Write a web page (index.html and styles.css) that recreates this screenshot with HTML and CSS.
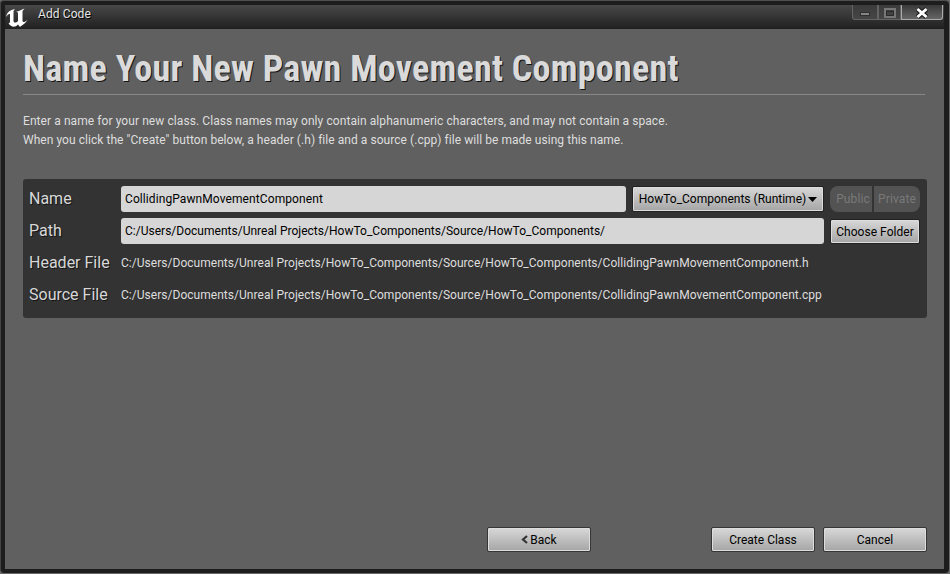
FILE: index.html
```
<!DOCTYPE html>
<html lang="en">
<head>
<meta charset="utf-8">
<title>Add Code</title>
<link rel="stylesheet" href="styles.css">
</head>
<body>
<div class="window">
  <header class="titlebar">
    <svg class="logo" viewBox="0 0 24 22" width="24" height="22"><path d="M1 11C2 6 5 4 10 3C8.500 4.500 8.500 5 8.500 7V15C9 17 11 17 13 15V7C13 6 12 6 11 6C14 5 16 4 19.500 2.500L17.500 5V15C18 17 20 16 22.500 14C20 18 17 19 15 21L13 18.500C10 22 6 21 3.500 17.500C5 17 5 16 5 15V8C4 7.500 2.500 8.500 1 11Z" fill="#fff"/></svg>
    <span class="caption">Add Code</span>
    <div class="controls">
      <span class="ctl min"><svg width="10" height="4"><rect x=".5" y=".5" width="9" height="3" fill="#858585" stroke="#303030"/></svg></span>
      <span class="ctl max"><svg width="12" height="10"><path d="M1 1H11V9H1Z" fill="none" stroke="#777" stroke-width="2"/><path d="M2.500 3.500H9.500V7.500H2.500Z" fill="none" stroke="#2a2a2a"/></svg></span>
      <span class="ctl close"><svg width="14" height="14" viewBox="0 0 14 14"><path d="M2.500 3L11.500 11M11.500 3L2.500 11" stroke="#111" stroke-width="5"/><path d="M2.500 3L11.500 11M11.500 3L2.500 11" stroke="#fff" stroke-width="3"/></svg></span>
    </div>
  </header>
  <main class="content">
    <h1>Name Your New Pawn Movement Component</h1>
    <div class="intro">
      <p class="i1">Enter a name for your new class. Class names may only contain alphanumeric characters, and may not contain a space.</p>
      <p class="i2">When you click the "Create" button below, a header (.h) file and a source (.cpp) file will be made using this name.</p>
    </div>
    <section class="panel">
      <div class="row"><label>Name</label><div class="field name">CollidingPawnMovementComponent</div>
        <div class="button combo"><span>HowTo_Components (Runtime)</span><svg width="9" height="5"><path d="M0 0H9L4.500 5Z" fill="#000"/></svg></div>
        <div class="segments"><span class="public">Public</span><span class="private">Private</span></div></div>
      <div class="row"><label>Path</label><div class="field path">C:/Users/Documents/Unreal Projects/HowTo_Components/Source/HowTo_Components/</div>
        <div class="button choose"><span>Choose Folder</span></div></div>
      <div class="row"><label>Header File</label><span class="value">C:/Users/Documents/Unreal Projects/HowTo_Components/Source/HowTo_Components/CollidingPawnMovementComponent.h</span></div>
      <div class="row"><label>Source File</label><span class="value">C:/Users/Documents/Unreal Projects/HowTo_Components/Source/HowTo_Components/CollidingPawnMovementComponent.cpp</span></div>
    </section>
    <footer class="actions">
      <div class="button back"><svg width="7" height="9"><path d="M6 1L2 4.500L6 8" fill="none" stroke="#333" stroke-width="2.200"/></svg><span>Back</span></div>
      <div class="button create"><span>Create Class</span></div>
      <div class="button"><span>Cancel</span></div>
    </footer>
  </main>
</div>
</body>
</html>
```
FILE: styles.css
```
* { box-sizing: border-box; }
body { margin: 0; background: #686868; font: 12px/16px Roboto, sans-serif; color: #dedede; }
.window { height: 573px; padding: 4px 5px 4px 4px; background: #1d1d1d; border-top: 1px solid #4d504e; border-left: 1px solid #444; border-radius: 4px; display: flex; flex-direction: column; width: 949px; }
.titlebar { height: 24px; flex: none; display: flex; background: linear-gradient(#484848, #202020); }
.logo { margin: 1px 0 0 0; flex: none; }
.caption { margin: 1px 0 0 9px; text-shadow: 1px 1px #000; color: #e4e4e4; white-space: nowrap; letter-spacing: .1px; }
.controls { margin-left: auto; display: flex; height: 16px; margin-right: 1px; }
.ctl { display: flex; align-items: center; justify-content: center; border: 1px solid #646464; border-top: 0; height: 15px; background: linear-gradient(#3b3b3b, #464646); padding-top: 4px; }
.min { width: 26px; border-radius: 0 0 0 3px; }
.max { width: 23px; padding-top: 2px; }
.close { width: 42px; border-color: #aaa; background: linear-gradient(#383838, #666); border-radius: 0 0 3px 0; padding-top: 1px; }
.content { flex: 1; background: #606060; padding: 18px 18px 0; display: flex; flex-direction: column; }
h1 { margin: 0; height: 48px; border-bottom: 1px solid #888; font: 700 36px/44px "Roboto Condensed", Roboto, sans-serif; font-stretch: 75%; letter-spacing: .28px; color: #dadada; text-shadow: 1px 1px #151515; white-space: nowrap; width: 902px; }
.intro { margin-top: 17px; height: 67px; }
.intro p { margin: 0; line-height: 19px; white-space: nowrap; }
.i1 { letter-spacing: .078px; }
.i2 { letter-spacing: .05px; }
.panel { width: 904px; height: 139px; background: #333; border-radius: 3px; padding: 4px 6px; }
.row { height: 32px; display: flex; align-items: center; white-space: nowrap; }
label { width: 92px; font-size: 16px; line-height: 20px; text-shadow: 1px 1px #151515; color: #d8d8d8; flex: none; }
.field { height: 26px; background: #d6d6d6; border-radius: 3px; color: #000; padding: 5px 4px 4px; margin-right: 6px; }
.name { width: 505px; letter-spacing: .09px; }
.path { width: 703px; letter-spacing: .013px; }
.value { letter-spacing: .033px; }
.button { height: 25px; width: 104px; border: 1px solid #363636; border-radius: 2px; background: linear-gradient(#d8d8d8, #a5a5a5); box-shadow: inset 0 0 0 1px #ddd; color: #000; display: flex; align-items: center; justify-content: center; white-space: nowrap; }
.combo { width: 192px; height: 26px; gap: 2px; border-color: #222; }
.segments { display: flex; height: 26px; gap: 2px; margin-left: 6px; color: #797979; }
.segments span { background: #535353; display: flex; align-items: center; justify-content: center; }
.segments .public { width: 42px; border-radius: 8px 0 0 8px; padding-left: 4px; letter-spacing: .1px; }
.segments .private { width: 46px; border-radius: 0 8px 8px 0; letter-spacing: .1px; }
.choose { width: 90px; border-color: #222; margin-top: 1px; letter-spacing: .04px; }
.actions { margin-top: auto; margin-bottom: 17px; margin-right: -1px; display: flex; justify-content: flex-end; gap: 8px; }
.back { gap: 2px; }
.create { margin-left: 112px; }
```
